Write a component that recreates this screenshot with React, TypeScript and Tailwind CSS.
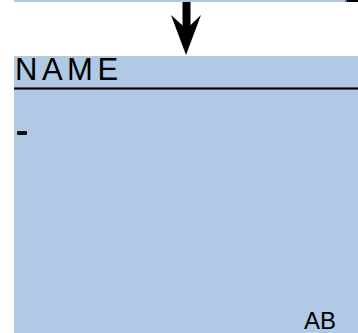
import React from "react";

export default function App() {
  return (
    <div className="w-[358px] h-[333px] bg-white overflow-hidden flex flex-col" style={{ fontFamily: '"Liberation Sans", Arial, sans-serif' }}>
      <div className="flex h-[2px] pl-[14px]">
        <div className="w-[331px] bg-[#b0c9e4]" />
        <div className="w-[2px] bg-[#6b7280]" />
        <div className="flex-1 bg-black" />
      </div>
      <div className="h-[54px] pl-[170px]">
        <svg width="32" height="54" viewBox="0 0 32 54">
          <rect x="12.5" y="0" width="8" height="28" fill="#000" />
          <polygon points="1,13 16.5,27 31,13 16,53" fill="#000" />
        </svg>
      </div>
      <div className="ml-[14px] flex-1 bg-[#b0c9e4] flex flex-col">
        <div className="text-[31px] leading-[28px] h-[28px] tracking-[4.5px] text-black pl-[1px]">NAME</div>
        <div className="mt-[3px] h-[3px] flex flex-col">
          <div className="h-[1px] bg-[#4b5563]" />
          <div className="h-[1px] bg-black" />
          <div className="h-[1px] bg-[#4b5563]" />
        </div>
        <div className="mt-[41px] ml-[3px] w-[10px] h-[4px] bg-[#111] rounded-[1px]" />
        <div className="mt-auto self-end pr-[22px] pb-[1px] text-[24px] leading-[22px] text-black">AB</div>
      </div>
    </div>
  );
}
